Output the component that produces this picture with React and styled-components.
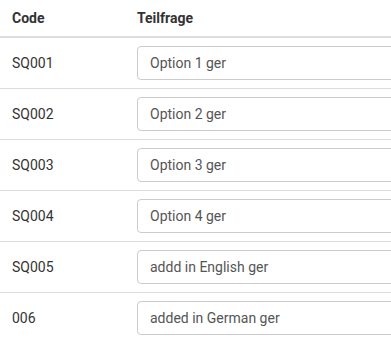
import React from "react";
import styled, { createGlobalStyle } from "styled-components";

const GlobalStyle = createGlobalStyle`
  html, body {
    margin: 0;
    padding: 0;
    background: #fff;
    overflow: hidden;
  }
  body {
    font-family: Roboto, "Liberation Sans", Arial, sans-serif;
    font-size: 14px;
    color: #333;
  }
`;

const Wrapper = styled.div`
  width: 391px;
  overflow: hidden;
`;

const Table = styled.table`
  width: 560px;
  border-collapse: collapse;
  border-spacing: 0;
`;

const HeadCell = styled.th`
  text-align: left;
  font-weight: 700;
  line-height: 20px;
  padding: 8px 12px;
  border-bottom: 2px solid #ddd;
  width: ${(p) => p.$width || "auto"};
`;

const Row = styled.tr`
  & + & td {
    border-top: 1px solid #ddd;
  }
`;

const Cell = styled.td`
  padding: 8px 12px;
  line-height: 20px;
  vertical-align: middle;
`;

const TextInput = styled.input`
  box-sizing: border-box;
  display: block;
  width: 100%;
  height: 34px;
  padding: 6px 12px;
  font-family: inherit;
  font-size: 14px;
  color: #555;
  background: #fff;
  border: 1px solid #ccc;
  border-radius: 4px;
  outline: none;
`;

const rows = [
  { code: "SQ001", text: "Option 1 ger" },
  { code: "SQ002", text: "Option 2 ger" },
  { code: "SQ003", text: "Option 3 ger" },
  { code: "SQ004", text: "Option 4 ger" },
  { code: "SQ005", text: "addd in English ger" },
  { code: "006", text: "added in German ger" },
];

const App = () => {
  return (
    <Wrapper>
      <GlobalStyle />
      <Table>
        <thead>
          <tr>
            <HeadCell $width="101px">Code</HeadCell>
            <HeadCell>Teilfrage</HeadCell>
          </tr>
        </thead>
        <tbody>
          {rows.map((row) => (
            <Row key={row.code}>
              <Cell>{row.code}</Cell>
              <Cell>
                <TextInput type="text" defaultValue={row.text} />
              </Cell>
            </Row>
          ))}
        </tbody>
      </Table>
    </Wrapper>
  );
};

export default App;
